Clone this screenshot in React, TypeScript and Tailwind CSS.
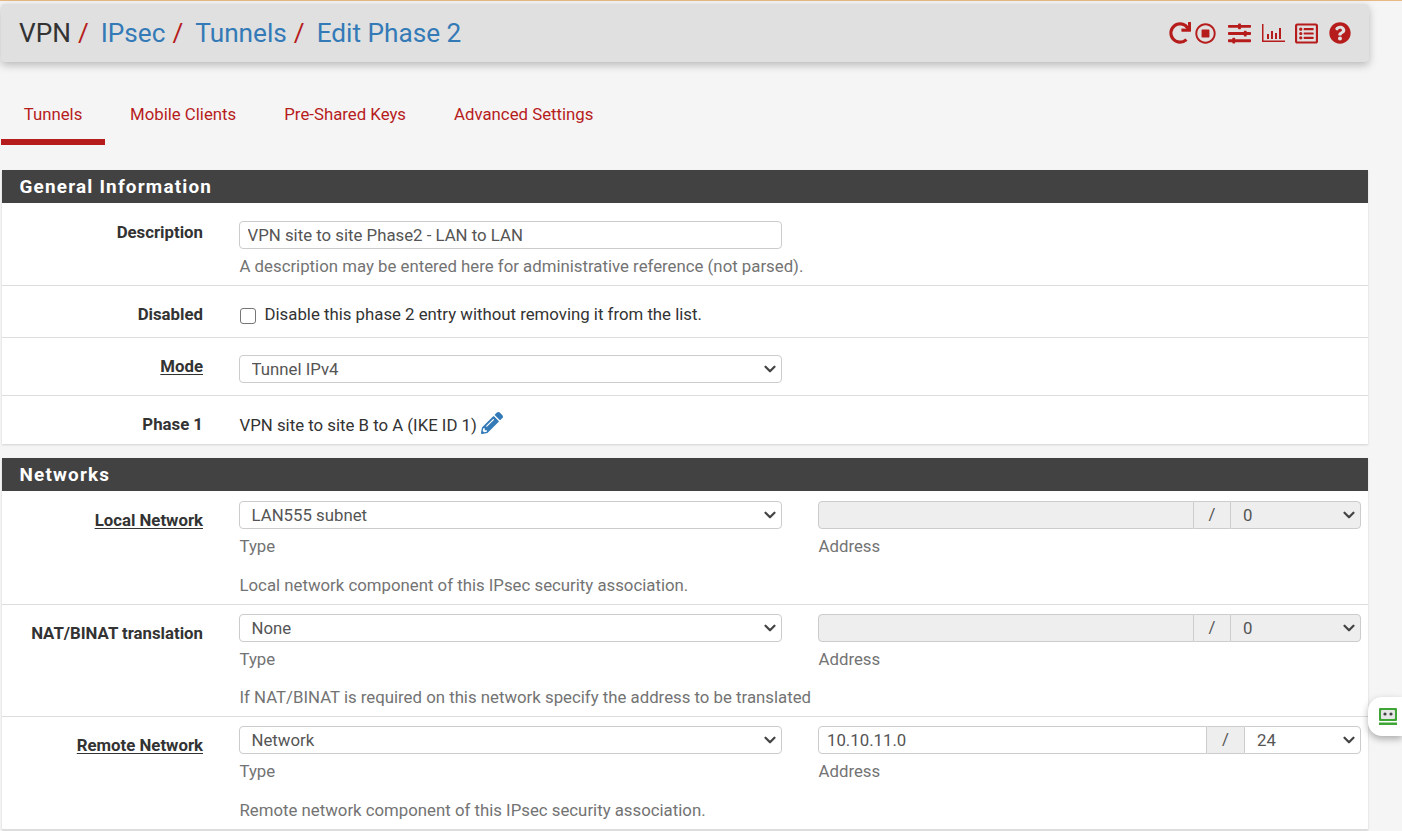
import { ChevronDown } from "lucide-react";
import {
  FaRedo,
  FaRegStopCircle,
  FaSlidersH,
  FaRegListAlt,
  FaQuestionCircle,
  FaPencilAlt,
} from "react-icons/fa";

const Chart = () => (
  <svg width="23" height="20" viewBox="0 0 23 20" fill="currentColor">
    <path d="M0 1h1.5v16.5H23V19H0z" />
    <path d="M5 11h2v5H5zM9 8h2v8H9zM13 10h2v6h-2zM17 5h2v11h-2z" />
  </svg>
);

const Select = ({ value, className = "" }: { value: string; className?: string }) => (
  <div className={`relative ${className}`}>
    <select
      defaultValue={value}
      className="w-full h-[28px] appearance-none rounded-[4px] border border-[#cccccc] bg-white pl-[11.5px] pr-8 text-[16.8px] leading-none text-[#555555] outline-none"
    >
      <option>{value}</option>
    </select>
    <ChevronDown
      size={18}
      strokeWidth={3}
      className="pointer-events-none absolute right-[3px] top-[5px] text-[#444444]"
    />
  </div>
);

const Hint = ({ children }: { children: React.ReactNode }) => (
  <p className="whitespace-nowrap pl-[0.5px] text-[16.8px] leading-[20px] text-[#737373]">{children}</p>
);

const Label = ({ children, link }: { children: string; link?: boolean }) => (
  <div className="w-[201px] shrink-0 text-right text-[16.8px] leading-[20px] font-bold text-[#333333]">
    {link ? <span className="underline underline-offset-2">{children}</span> : children}
  </div>
);

const Address = ({ value, mask, disabled }: { value: string; mask: string; disabled?: boolean }) => (
  <div className="flex h-[28px]">
    <input
      defaultValue={value}
      disabled={disabled}
      className={`min-w-0 flex-1 rounded-l-[4px] border border-[#cccccc] px-2 pt-[1px] text-[16.8px] text-[#555555] outline-none ${
        disabled ? "bg-[#eeeeee]" : "bg-white"
      }`}
    />
    <span
      className={`flex shrink-0 items-center justify-center border-y border-[#cccccc] bg-[#eeeeee] text-[16.8px] text-[#555555] ${
        disabled ? "w-[36px]" : "w-[37px]"
      }`}
    >
      /
    </span>
    <div className={`relative shrink-0 ${disabled ? "w-[131px]" : "w-[117px]"}`}>
      <select
        defaultValue={mask}
        disabled={disabled}
        className={`h-[28px] w-full appearance-none rounded-r-[4px] border border-[#cccccc] pl-3 text-[16.8px] leading-none text-[#555555] opacity-100 outline-none ${
          disabled ? "bg-[#eeeeee]" : "bg-white"
        }`}
      >
        <option>{mask}</option>
      </select>
      <ChevronDown
        size={18}
        strokeWidth={3}
        className="pointer-events-none absolute right-[3px] top-[5px] text-[#444444]"
      />
    </div>
  </div>
);

const NetworkRow = ({
  label,
  link,
  type,
  address,
  mask,
  disabled,
  help,
  height,
  padding,
  helpGap,
}: {
  label: string;
  link?: boolean;
  type: string;
  address: string;
  mask: string;
  disabled?: boolean;
  help: string;
  height: string;
  padding: string;
  helpGap: string;
}) => (
  <div className={`flex border-b border-[#dddddd] ${padding} ${height}`}>
    <div className="pt-[9px]">
      <Label link={link}>{label}</Label>
    </div>
    <div className="ml-[36px] flex-1 pr-[7px]">
      <div className="grid grid-cols-[543px_543px] gap-x-[36px]">
        <div>
          <Select value={type} />
          <div className="mt-[7px]">
            <Hint>Type</Hint>
          </div>
        </div>
        <div>
          <Address value={address} mask={mask} disabled={disabled} />
          <div className="mt-[7px]">
            <Hint>Address</Hint>
          </div>
        </div>
      </div>
      <div className={helpGap}>
        <Hint>{help}</Hint>
      </div>
    </div>
  </div>
);

const PanelHeading = ({ children }: { children: string }) => (
  <div className="flex h-[33px] items-center bg-[#424242] pl-[17.5px] pt-[1px] text-[18.9px] font-bold tracking-[1.2px] text-white">
    {children}
  </div>
);

export default function App() {
  return (
    <div className="relative h-[831px] overflow-hidden bg-[#f5f5f5] font-['Roboto',sans-serif]">
      <div className="h-[1px] bg-[#e8b984]" />

      {/* Breadcrumb bar */}
      <header className="ml-[1px] mt-[3px] flex h-[58px] w-[1368px] items-center justify-between rounded-[4px] bg-[#e0e0e0] pl-[18px] pr-[18px] shadow-[0_3px_8px_rgba(0,0,0,0.25)]">
        <h1 className="flex text-[26.2px] leading-none text-[#337ab7]">
          <span className="text-[#333333]">VPN</span>
          <span className="ml-[7px] mr-[12px] text-[#b71c1c]">/</span>
          <span>IPsec</span>
          <span className="ml-[7px] mr-[12px] text-[#b71c1c]">/</span>
          <span>Tunnels</span>
          <span className="ml-[7px] mr-[12px] text-[#b71c1c]">/</span>
          <span>Edit Phase 2</span>
        </h1>
        <div className="flex items-center text-[#b71c1c]">
          <FaRedo size={22} />
          <FaRegStopCircle size={21} className="ml-[4px]" />
          <FaSlidersH size={23} className="ml-[12px]" />
          <div className="ml-[11px]">
            <Chart />
          </div>
          <FaRegListAlt size={23} className="ml-[10px]" />
          <FaQuestionCircle size={22} className="ml-[11px]" />
        </div>
      </header>

      {/* Tabs */}
      <nav className="ml-[1px] mt-[22px] flex h-[61px] text-[16.8px] text-[#b71c1c]">
        <a className="flex w-[104px] items-center justify-center border-b-[6px] border-[#b71c1c] pt-[6px]">Tunnels</a>
        <a className="ml-[25px] flex items-start pt-[18px]">Mobile Clients</a>
        <a className="ml-[48px] flex items-start pt-[18px]">Pre-Shared Keys</a>
        <a className="ml-[48px] flex items-start pt-[18px]">Advanced Settings</a>
      </nav>

      <main className="ml-[2px] mt-[25px] w-[1366px]">
        <section className="bg-white shadow-[0_1px_2px_rgba(0,0,0,0.15)]">
          <PanelHeading>General Information</PanelHeading>
          <div className="flex h-[83px] border-b border-[#dddddd] pt-[18px]">
            <div className="pt-[1px]">
              <Label>Description</Label>
            </div>
            <div className="ml-[36px] w-[543px]">
              <input
                defaultValue="VPN site to site Phase2 - LAN to LAN"
                className="h-[28px] w-full rounded-[4px] border border-[#cccccc] bg-white pl-[7.5px] pr-2 text-[16.8px] text-[#555555] outline-none"
              />
              <div className="mt-[7px]">
                <Hint>A description may be entered here for administrative reference (not parsed).</Hint>
              </div>
            </div>
          </div>
          <div className="flex h-[52px] items-center border-b border-[#dddddd] pt-[5px]">
            <Label>Disabled</Label>
            <label className="ml-[36px] flex items-center text-[16.8px] text-[#333333]">
              <span className="mt-[3px] ml-[1px] h-[16px] w-[16px] rounded-[3px] border border-[#767676] bg-white" />
              <span className="ml-[8.5px] mt-[1px]">Disable this phase 2 entry without removing it from the list.</span>
            </label>
          </div>
          <div className="flex h-[58px] border-b border-[#dddddd] pt-[17px]">
            <div className="pt-[1px]">
              <Label link>Mode</Label>
            </div>
            <div className="ml-[36px] w-[543px]">
              <Select value="Tunnel IPv4" />
            </div>
          </div>
          <div className="flex h-[48px] items-center pt-[9px]">
            <div className="mb-[2px]">
              <Label>Phase 1</Label>
            </div>
            <div className="ml-[36.5px] flex items-center text-[16.8px] text-[#333333]">
              <span className="mt-[2px]">VPN site to site B to A (IKE ID 1)</span>
              <FaPencilAlt size={22} className="mb-[4px] ml-[4.5px] text-[#337ab7]" />
            </div>
          </div>
        </section>

        <section className="mt-[14px] bg-white shadow-[0_1px_2px_rgba(0,0,0,0.15)]">
          <PanelHeading>Networks</PanelHeading>
          <NetworkRow
            label="Local Network"
            link
            type="LAN555 subnet"
            address=""
            mask="0"
            disabled
            help="Local network component of this IPsec security association."
            height="h-[114px]"
            padding="pt-[10px]"
            helpGap="mt-[19px]"
          />
          <NetworkRow
            label="NAT/BINAT translation"
            type="None"
            address=""
            mask="0"
            disabled
            help="If NAT/BINAT is required on this network specify the address to be translated"
            height="h-[112px]"
            padding="pt-[9px]"
            helpGap="mt-[18px]"
          />
          <NetworkRow
            label="Remote Network"
            link
            type="Network"
            address="10.10.11.0"
            mask="24"
            help="Remote network component of this IPsec security association."
            height="h-[113px]"
            padding="pt-[9px]"
            helpGap="mt-[19px]"
          />
        </section>
      </main>

      {/* Password manager tab */}
      <div className="absolute left-[1368px] top-[697px] flex h-[39px] w-[34px] items-center justify-end rounded-l-[14px] bg-white pr-[4px] shadow-[0_3px_7px_rgba(0,0,0,0.3)]">
        <svg width="20" height="19" viewBox="0 0 20 19">
          <rect x="1" y="1" width="18" height="13" rx="1" fill="#3fa535" />
          <rect x="3" y="3" width="14" height="9" rx="1" fill="#e6e6e6" />
          <circle cx="7" cy="7" r="1.6" fill="#424242" />
          <circle cx="13" cy="7" r="1.6" fill="#424242" />
          <rect x="1" y="15.5" width="18" height="2.5" fill="#3fa535" />
        </svg>
      </div>
    </div>
  );
}
